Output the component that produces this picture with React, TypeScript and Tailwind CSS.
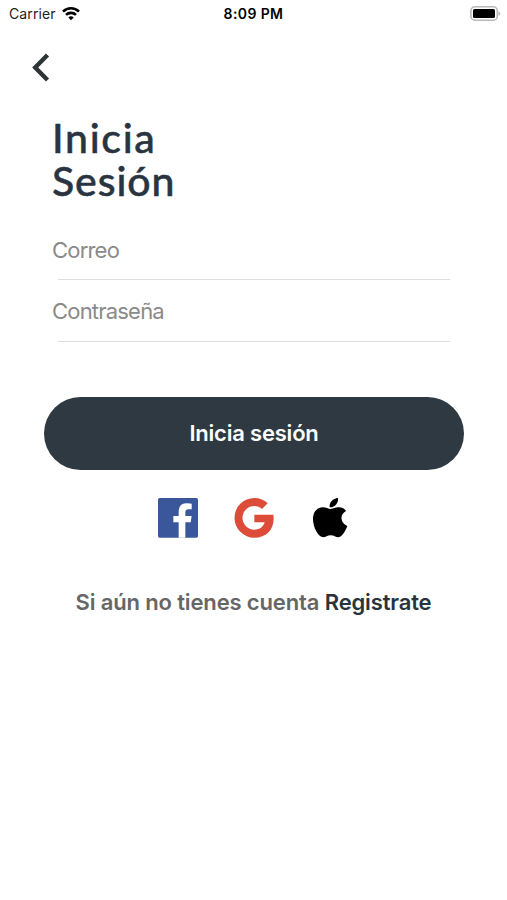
import type { ReactNode } from 'react'

function StatusBar() {
  return (
    <header className="flex h-7 items-center justify-between pl-[9px] pr-[6px] text-black">
      <div className="flex w-[100px] items-center gap-[6px]">
        <span className="text-[14px] leading-7 tracking-[0.1px] text-[#222]">Carrier</span>
        <svg width="18" height="14" viewBox="0 0 18 14" fill="none" stroke="currentColor" strokeWidth="2.6">
          <path d="M1 4.6C5.5.2 12.5.2 17 4.6" />
          <path d="M4 7.9c2.8-2.7 7.2-2.7 10 0" />
          <path d="M6.3 10.4c1.5-1.5 3.9-1.5 5.4 0L9 13.3Z" fill="currentColor" stroke="none" />
        </svg>
      </div>
      <span className="text-[14px] font-semibold leading-7 tracking-[0.4px]">8:09 PM</span>
      <div className="flex w-[103px] items-center justify-end">
        <svg className="-mt-[2px]" width="31" height="15" viewBox="0 0 31 15">
          <rect x=".9" y=".8" width="26.4" height="13.4" rx="4" fill="#fff" stroke="#b8b8b8" strokeWidth="1.6" />
          <rect x="3" y="3" width="22" height="9" rx="1.6" fill="#000" />
          <path d="M28.5 5.2c2.4.9 2.4 3.7 0 4.6Z" fill="#b8b8b8" />
        </svg>
      </div>
    </header>
  )
}

function Field({ label, type }: { label: string; type: string }) {
  return (
    <div className="h-[61.5px]">
      <input
        type={type}
        placeholder={label}
        aria-label={label}
        className="block h-[45px] w-full bg-transparent pb-[14px] text-[22px] tracking-[-0.8px] outline-none placeholder:text-[#8a8a8a]"
      />
      <div className="ml-[6px] h-px bg-[#dedede]" />
    </div>
  )
}

function SocialButton({ label, children }: { label: string; children: ReactNode }) {
  return (
    <button aria-label={label} className="flex size-10 items-center justify-center">
      {children}
    </button>
  )
}

export default function App() {
  return (
    <main className="flex h-[900px] w-[507px] flex-col bg-white font-['Inter','Liberation_Sans',sans-serif]">
      <StatusBar />

      <button aria-label="Volver" className="ml-[32px] mt-[25px] h-[29px] w-[18px]">
        <svg width="18" height="29" viewBox="0 0 18 29" fill="none" stroke="#2d3436" strokeWidth="4.4">
          <path d="M15.5 2 3.2 14.5 15.5 27" />
        </svg>
      </button>

      <h1 className="ml-[52px] mt-[34px] font-['Lato',sans-serif] text-[41px] font-medium leading-[43px] text-[#2a3441] [-webkit-text-stroke:0.5px_#2a3441]">
        <span className="block tracking-[1.7px]">Inicia</span>
        <span className="block tracking-[0.9px]">Sesión</span>
      </h1>

      <form className="ml-[52px] mt-8 w-[398px]">
        <Field label="Correo" type="email" />
        <Field label="Contraseña" type="password" />
      </form>

      <button className="ml-[44px] mt-[40px] h-[73px] w-[420px] shrink-0 rounded-full bg-[#2e3942] text-[22px] font-semibold tracking-[-0.2px] text-white">
        Inicia sesión
      </button>

      <div className="ml-[158px] mt-7 flex gap-9">
        <SocialButton label="Facebook">
          <svg width="40" height="40" viewBox="0 0 120 120">
            <rect width="120" height="119" rx="5" fill="#39579a" />
            <path
              fill="#fff"
              d="M62 119V73H46V54H62V42Q62 17 84 16Q92 15 101 17V34H91Q82 34 82 43V54H101L98 73H82V119Z"
            />
          </svg>
        </SocialButton>
        <SocialButton label="Google">
          <svg width="40" height="40" viewBox="0 0 120 120">
            <path
              fill="#dd4b39"
              d="M61 50H118C124 90 100 119 61 119A59.5 59.5 0 0 1 61 0C77 0 91 6 101 16L84 33C78 27 70 24 61 24A35.5 35.5 0 0 0 61 95C77 95 88 87 92 73H61Z"
            />
          </svg>
        </SocialButton>
        <SocialButton label="Apple">
          <svg width="40" height="40" viewBox="-9 0 120 120" fill="#000">
            <path d="M53 33C62 31 68 27 78 28C88 28 95 33 99 39C88 46 84 54 86 64C87 74 94 80 103 84C96 102 86 117 76 118C68 118 63 112 53 112C43 112 38 118 31 118C15 117 0 87 0 63C0 40 14 28 29 28C39 28 46 33 53 33Z" />
            <path d="M50 28C48 13 60 1 75 0C77 15 65 29 50 28Z" />
          </svg>
        </SocialButton>
      </div>

      <p className="mt-[49px] text-center text-[22px] font-semibold leading-[30px] tracking-[-0.14px] text-[#666]">
        Si aún no tienes cuenta <a className="text-[#2a333b]">Registrate</a>
      </p>
    </main>
  )
}
